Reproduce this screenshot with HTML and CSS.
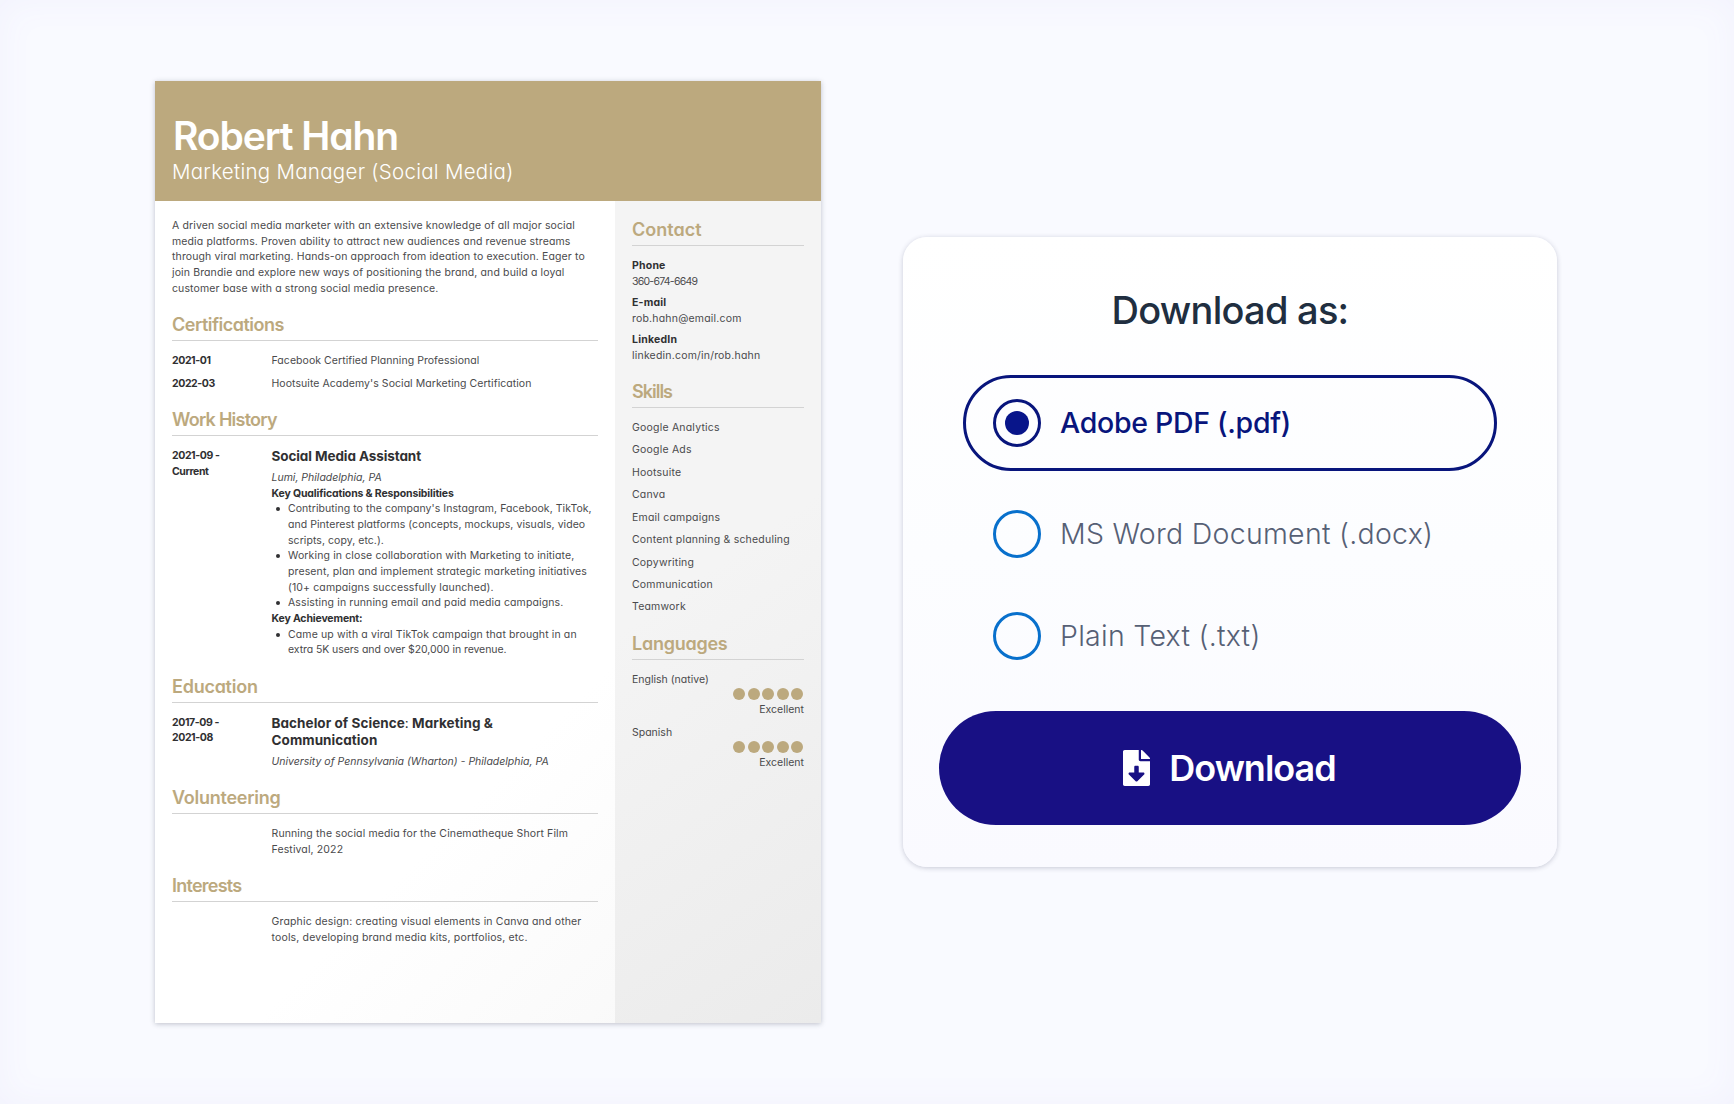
FILE: index.html
```html
<!DOCTYPE html>
<html lang="en">
<head>
<meta charset="utf-8">
<title>Download resume</title>
<link rel="stylesheet" href="styles.css">
</head>
<body>
<main class="stage">
  <article class="resume">
    <header class="banner">
      <h1 class="name">Robert Hahn</h1>
      <p class="role">Marketing Manager (Social Media)</p>
    </header>
    <div class="columns">
      <div class="main">
        <p class="summary">A driven social media marketer with an extensive knowledge of all major social<br>media platforms. Proven ability to attract new audiences and revenue streams<br>through viral marketing. Hands-on approach from ideation to execution. Eager to<br>join Brandie and explore new ways of positioning the brand, and build a loyal<br>customer base with a strong social media presence.</p>

        <h2 class="heading medium">Certifications</h2>
        <div class="rows">
          <div class="row"><div class="date">2021-01</div><div class="tight">Facebook Certified Planning Professional</div></div>
          <div class="row"><div class="date">2022-03</div><div class="tight">Hootsuite Academy's Social Marketing Certification</div></div>
        </div>

        <h2 class="heading narrow">Work History</h2>
        <div class="rows">
          <div class="row">
            <div class="date">2021-09 -<br>Current</div>
            <div>
              <h3 class="title">Social Media Assistant</h3>
              <p class="place">Lumi, Philadelphia, PA</p>
              <p class="key">Key Qualifications &amp; Responsibilities</p>
              <ul class="points">
                <li><span class="tight">Contributing to the company's Instagram, Facebook, TikTok,<br>and Pinterest platforms (concepts, mockups, visuals, video<br>scripts, copy, etc.).</span></li>
                <li>Working in close collaboration with Marketing to initiate,<br>present, plan and implement strategic marketing initiatives<br>(10+ campaigns successfully launched).</li>
                <li>Assisting in running email and paid media campaigns.</li>
              </ul>
              <p class="key">Key Achievement:</p>
              <ul class="points">
                <li>Came up with a viral TikTok campaign that brought in an<br><span class="figures">extra 5K users and over $20,000 in revenue.</span></li>
              </ul>
            </div>
          </div>
        </div>

        <h2 class="heading">Education</h2>
        <div class="rows">
          <div class="row">
            <div class="date">2017-09 -<br>2021-08</div>
            <div>
              <h3 class="title degree">Bachelor of Science<span class="colon">:</span> Marketing &amp;<br>Communication</h3>
              <p class="place">University of Pennsylvania (Wharton) - Philadelphia, PA</p>
            </div>
          </div>
        </div>

        <h2 class="heading">Volunteering</h2>
        <div class="rows">
          <div class="row"><div></div><div>Running the social media for the Cinematheque Short Film<br>Festival, 2022</div></div>
        </div>

        <h2 class="heading narrow">Interests</h2>
        <div class="rows">
          <div class="row"><div></div><div class="wide">Graphic design: creating visual elements in Canva and other<br>tools, developing brand media kits, portfolios, etc.</div></div>
        </div>
      </div>

      <aside class="side">
        <h2 class="heading first">Contact</h2>
        <dl class="contact">
          <div><dt>Phone</dt><dd class="phone">360-674-6649</dd></div>
          <div><dt>E-mail</dt><dd>rob.hahn@email.com</dd></div>
          <div><dt>LinkedIn</dt><dd>linkedin.com/in/rob.hahn</dd></div>
        </dl>

        <h2 class="heading narrowest">Skills</h2>
        <ul class="skills">
          <li>Google Analytics</li>
          <li>Google Ads</li>
          <li>Hootsuite</li>
          <li>Canva</li>
          <li>Email campaigns</li>
          <li>Content planning &amp; scheduling</li>
          <li>Copywriting</li>
          <li>Communication</li>
          <li>Teamwork</li>
        </ul>

        <h2 class="heading">Languages</h2>
        <div class="languages">
          <div>
            <p class="language">English (native)</p>
            <div class="dots"><i></i><i></i><i></i><i></i><i></i></div>
            <p class="level">Excellent</p>
          </div>
          <div>
            <p class="language">Spanish</p>
            <div class="dots"><i></i><i></i><i></i><i></i><i></i></div>
            <p class="level">Excellent</p>
          </div>
        </div>
      </aside>
    </div>
  </article>

  <section class="card">
    <h2 class="card-title">Download as:</h2>
    <div class="options">
      <div class="option selected"><span class="radio"></span><span class="label">Adobe PDF (.pdf)</span></div>
      <div class="option"><span class="radio"></span><span class="label">MS Word Document (.docx)</span></div>
      <div class="option"><span class="radio"></span><span class="label">Plain Text (.txt)</span></div>
    </div>
    <button class="download" type="button">
      <svg class="file" viewBox="0 0 384 512" aria-hidden="true"><path fill="#fff" d="M224 136V0H24C10.700 0 0 10.700 0 24v464c0 13.300 10.700 24 24 24h336c13.300 0 24-10.700 24-24V160H248c-13.200 0-24-10.800-24-24zm76.450 211.360l-96.420 95.700c-6.650 6.610-17.390 6.610-24.040 0l-96.420-95.700C73.420 337.290 80.540 320 94.820 320H160v-80c0-8.840 7.160-16 16-16h32c8.840 0 16 7.160 16 16v80h65.180c14.280 0 21.400 17.290 11.270 27.360zM377 105L279.100 7c-4.500-4.500-10.600-7-17-7H256v128h128v-6.100c0-6.300-2.500-12.400-7-16.900z"/></svg>
      <span>Download</span>
    </button>
  </section>
</main>
</body>
</html>
```
FILE: styles.css
```css
* { box-sizing: border-box; margin: 0; padding: 0; }

body {
  background: #f9faff;
  font-family: Inter, sans-serif;
}

.stage {
  display: flex;
  align-items: center;
  gap: 82px;
  width: 1734px;
  height: 1104px;
  padding: 0 0 1px 155px;
  box-shadow: inset 0 0 36px #f2f2fd;
}

/* Resume sheet */
.resume {
  display: flex;
  flex-direction: column;
  width: 666px;
  height: 942px;
  background: #fff;
  box-shadow: 0 1px 5px rgba(40, 45, 70, .28);
  color: #4a4a4c;
  font-size: 10.5px;
  line-height: 15.67px;
  letter-spacing: .125px;
  font-feature-settings: "cv11";
  white-space: nowrap;
}

.banner {
  height: 120px;
  padding: 31px 17px 0;
  background: #bca97e;
  color: #fff;
}

.name {
  padding-left: 1px;
  font-size: 39px;
  font-weight: 620;
  line-height: 48px;
  letter-spacing: -1.1px;
}

.role {
  font-size: 20.5px;
  font-weight: 300;
  line-height: 24px;
  letter-spacing: .28px;
}

.columns {
  display: grid;
  grid-template-columns: 460px 206px;
  flex: 1;
  background: linear-gradient(135deg, #fff 62%, #fafafa 84%, #f5f5f5);
}

.main { padding: 17.6px 17px 0; }

.side {
  padding: .6px 17px 0;
  background: linear-gradient(145deg, #f4f4f4 45%, #ebebeb);
  letter-spacing: .2px;
}

.heading {
  margin-top: 16.9px;
  padding-bottom: 3px;
  border-bottom: 1px solid #d3d3d3;
  color: #bca97e;
  font-size: 18px;
  font-weight: 630;
  line-height: 24px;
  letter-spacing: -.25px;
}

.heading.medium { letter-spacing: -.5px; }
.heading.narrow { letter-spacing: -.75px; }
.heading.narrowest { letter-spacing: -1px; }
.heading.first { letter-spacing: 0; }

.rows, .contact, .skills, .languages {
  display: flex;
  flex-direction: column;
  padding-top: 11.9px;
}

.rows { gap: 6.6px; }
.row { display: grid; grid-template-columns: 99.5px 1fr; }
.tight { letter-spacing: .055px; }
.wide { letter-spacing: .16px; }
.figures { letter-spacing: -.08px; }

.date, .key, dt { color: #303032; font-weight: 700; }
.date { letter-spacing: -.4px; }
.key { letter-spacing: -.15px; }

.title {
  margin-bottom: 5.2px;
  color: #303032;
  font-size: 13.5px;
  font-weight: 700;
  line-height: 16.8px;
  letter-spacing: -.09px;
}

.degree { letter-spacing: .06px; }
.colon { font-weight: 400; }
.place { font-style: italic; letter-spacing: 0; }

.points { padding-left: 16.5px; list-style: none; }

.points li::before {
  content: "";
  float: left;
  width: 4px;
  height: 4px;
  margin: 6px 0 0 -12.5px;
  border-radius: 50%;
  background: #303032;
}

.contact { gap: 5.7px; }
.phone { letter-spacing: -.75px; }
.skills { gap: 6.75px; list-style: none; }

.languages { gap: 6.9px; letter-spacing: 0; }

.dots {
  display: flex;
  justify-content: flex-end;
  gap: 2.5px;
  padding: 0 1px 1px 0;
  height: 14.5px;
  align-items: center;
}

.dots i {
  width: 12px;
  height: 12px;
  border-radius: 50%;
  background: #bca97e;
}

.level { text-align: right; }

/* Download card */
.card {
  display: flex;
  flex-direction: column;
  width: 654px;
  height: 630px;
  padding: 49px 36px 0;
  border-radius: 24px;
  background: linear-gradient(#fff, #fcfdff 50%, #fafaff);
  box-shadow: 0 1px 5px rgba(40, 45, 80, .24);
}

.card-title {
  color: #202e40;
  font-size: 38px;
  font-weight: 530;
  line-height: 48px;
  letter-spacing: -.75px;
  text-align: center;
}

.options {
  display: flex;
  flex-direction: column;
  gap: 6px;
  padding: 41px 24px 0;
}

.option {
  display: flex;
  align-items: center;
  gap: 19px;
  height: 96px;
  padding-left: 27px;
  border: 3px solid transparent;
  border-radius: 48px;
  color: #566075;
}

.selected + .option { margin-top: 9px; }

.radio {
  display: flex;
  width: 48px;
  height: 48px;
  border: 3px solid #0870cc;
  border-radius: 50%;
}

.label {
  font-size: 28.5px;
  font-weight: 350;
  line-height: 36px;
  letter-spacing: .27px;
}

.selected { border-color: #08157c; color: #08157c; }
.selected .radio { align-items: center; justify-content: center; border-color: #08157c; }

.selected .radio::after {
  content: "";
  width: 24px;
  height: 24px;
  border-radius: 50%;
  background: #08158a;
}

.selected .label { font-weight: 520; letter-spacing: -.3px; }

.download {
  display: flex;
  align-items: center;
  justify-content: center;
  gap: 19px;
  width: 582px;
  height: 114px;
  margin-top: 27px;
  padding-right: 1px;
  border: 0;
  border-radius: 57px;
  background: #181084;
  color: #fff;
  font: 600 36px/48px Inter, sans-serif;
  letter-spacing: -1px;
}

.file { width: 27px; height: 36px; }
```
